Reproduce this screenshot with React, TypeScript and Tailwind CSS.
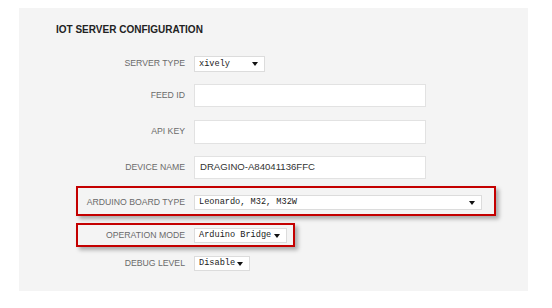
import React from 'react';

const Arrow = () => (
  <svg width="6" height="4" viewBox="0 0 6 4" className="shrink-0">
    <path d="M0 0H6L3 4Z" fill="#111" />
  </svg>
);

const Select: React.FC<{ value: string; width: number; height: number }> = ({ value, width, height }) => (
  <div
    className="flex items-center justify-between bg-white border border-[#dcdcdc] pl-[4px] pr-[6px] text-[8.6px] text-[#1a1a1a] font-['Liberation_Mono',monospace]"
    style={{ width, height }}
  >
    <span className="leading-none">{value}</span>
    <Arrow />
  </div>
);

const Input: React.FC<{ value?: string; width: number; height: number }> = ({ value, width, height }) => (
  <div
    className="flex items-center bg-white border border-[#e2e2e2] pl-[5px] text-[9.6px] text-[#333] font-['Liberation_Sans',Arial,sans-serif]"
    style={{ width, height }}
  >
    {value}
  </div>
);

const Label: React.FC<{ children: React.ReactNode }> = ({ children }) => (
  <label className="w-[166px] text-right text-[8.7px] text-[#6a6a6a] font-['Liberation_Sans',Arial,sans-serif]">
    {children}
  </label>
);

export default function App() {
  return (
    <div className="w-[552px] h-[308px] bg-white pt-[8px] pl-[19px]">
      <div className="relative w-[509px] h-[283px] bg-[#f4f4f4] pt-[15px]">
        <h2 className="pl-[37px] leading-[14px] text-[10px] font-bold text-[#222] font-['Liberation_Sans',Arial,sans-serif]">
          IOT SERVER CONFIGURATION
        </h2>

        {/* Server type */}
        <div className="flex items-center gap-[9px] mt-[19px]">
          <Label>SERVER TYPE</Label>
          <Select value="xively" width={71} height={16} />
        </div>

        {/* Feed id */}
        <div className="flex items-center gap-[9px] mt-[12px]">
          <Label>FEED ID</Label>
          <Input width={232} height={23} />
        </div>

        {/* Api key */}
        <div className="flex items-center gap-[9px] mt-[13px]">
          <Label>API KEY</Label>
          <Input width={232} height={24} />
        </div>

        {/* Device name */}
        <div className="flex items-center gap-[9px] mt-[12px]">
          <Label>DEVICE NAME</Label>
          <Input value="DRAGINO-A84041136FFC" width={232} height={23} />
        </div>

        {/* Board type */}
        <div className="flex items-center gap-[9px] mt-[16px]">
          <Label>ARDUINO BOARD TYPE</Label>
          <Select value="Leonardo, M32, M32W" width={288} height={15} />
        </div>

        {/* Operation mode */}
        <div className="flex items-center gap-[9px] mt-[18px]">
          <Label>OPERATION MODE</Label>
          <Select value="Arduino Bridge" width={93} height={15} />
        </div>

        {/* Debug level */}
        <div className="flex items-center gap-[9px] mt-[13px]">
          <Label>DEBUG LEVEL</Label>
          <Select value="Disable" width={56} height={15} />
        </div>

        {/* annotation boxes */}
        <div className="absolute left-[57px] top-[178px] w-[420px] h-[30px] border-2 border-[#c40000] shadow-[3px_3px_4px_rgba(0,0,0,0.3)]" />
        <div className="absolute left-[57px] top-[215px] w-[219px] h-[24px] border-2 border-[#c40000] shadow-[3px_3px_4px_rgba(0,0,0,0.3)]" />
      </div>
    </div>
  );
}
